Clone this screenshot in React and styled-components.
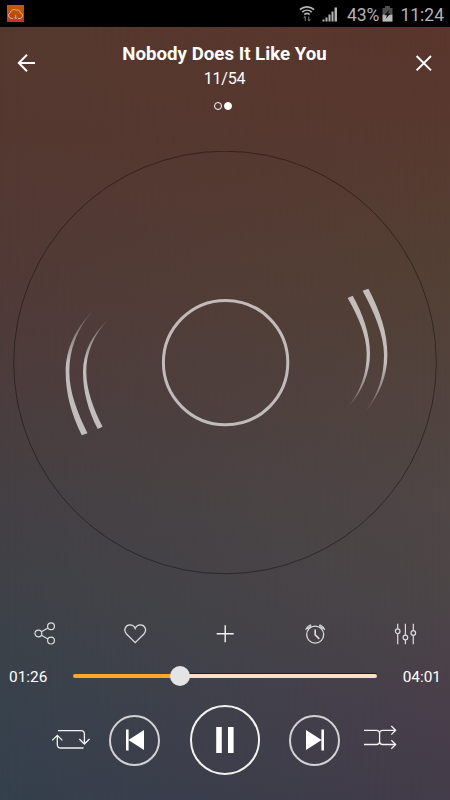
import React, { useState } from 'react';
import styled, { createGlobalStyle } from 'styled-components';

const GlobalStyle = createGlobalStyle`
    * {
        box-sizing: border-box;
    }

    body {
        margin: 0;
        background: #000;
        font-family: Roboto, 'Liberation Sans', sans-serif;
    }
`;

// Styled Components
const Screen = styled.div`
    display: flex;
    flex-direction: column;
    width: 450px;
    height: 800px;
    overflow: hidden;
    color: #fff;
`;

const StatusBar = styled.div`
    display: flex;
    align-items: center;
    justify-content: space-between;
    height: 27px;
    padding: 0 6px 0 7px;
    background: #000;
    color: #b4b4b4;
`;

const StatusGroup = styled.div`
    display: flex;
    align-items: center;
    height: 27px;
`;

const StatusText = styled.span`
    font-size: 17.5px;
    line-height: 27px;
    padding-top: 3px;
    margin-left: ${(props) => props.$gap}px;
`;

const StatusIcon = styled.div`
    display: flex;
    padding-top: ${(props) => props.$drop || 0}px;
    margin-left: ${(props) => props.$gap}px;
`;

const Player = styled.main`
    position: relative;
    isolation: isolate;
    display: flex;
    flex-direction: column;
    flex: 1;
    background: linear-gradient(
        180deg,
        #55392f 0%,
        #543830 14%,
        #513a37 33%,
        #4b3d3e 48%,
        #444044 61%,
        #3e4248 74%,
        #38424c 87%,
        #34404c 100%
    );

    /* warmer tint that fades in towards the right edge */
    &::before {
        content: '';
        position: absolute;
        inset: 0;
        z-index: -1;
        background: linear-gradient(
            180deg,
            #5a352b 0%,
            #573930 14%,
            #534034 32%,
            #51433e 48%,
            #4f4645 61%,
            #4c4547 74%,
            #493f4a 87%,
            #433b49 100%
        );
        mask-image: linear-gradient(90deg, transparent, #000);
    }
`;

const Header = styled.header`
    display: flex;
    justify-content: space-between;
    align-items: flex-start;
    height: 124px;
    padding: 15px 14px 0 15px;
`;

const IconButton = styled.button`
    display: flex;
    align-items: center;
    justify-content: center;
    width: ${(props) => props.$size || 24}px;
    height: ${(props) => props.$size || 24}px;
    margin: ${(props) => props.$margin || 0};
    padding: 0;
    border: none;
    background: none;
    color: inherit;
    cursor: pointer;
`;

const TrackInfo = styled.div`
    display: flex;
    flex-direction: column;
    align-items: center;
    margin-right: 2px;
`;

const TrackTitle = styled.h1`
    margin: 0;
    font-size: 18.7px;
    font-weight: 700;
    line-height: 24px;
    white-space: nowrap;
`;

const TrackCount = styled.span`
    font-size: 16px;
    line-height: 24px;
    margin-top: 1px;
    letter-spacing: -0.2px;
`;

const Dots = styled.div`
    display: flex;
    gap: 2px;
    margin: 10.5px 3px 0 0;
`;

const Dot = styled.span`
    width: 8px;
    height: 8px;
    border: 1px solid #fff;
    border-radius: 50%;
    background: ${(props) => (props.$active ? '#fff' : 'transparent')};
`;

const Disc = styled.svg`
    display: block;
    width: 450px;
    height: 424px;
`;

const Tools = styled.div`
    display: grid;
    grid-template-columns: repeat(5, 1fr);
    justify-items: center;
    align-items: center;
    height: 30px;
    margin-top: 43px;
    color: #dcdcde;
`;

const SeekRow = styled.div`
    display: flex;
    align-items: center;
    justify-content: space-between;
    height: 30px;
    margin-top: 13px;
    padding: 0 9px;
`;

const Time = styled.span`
    font-size: 15.4px;
    line-height: 30px;
    padding-top: 1px;
`;

const SeekBar = styled.div`
    display: flex;
    align-items: center;
    width: 304px;
    height: 20px;
`;

const Played = styled.div`
    height: 4px;
    border-radius: 2px 0 0 2px;
    background: #ffa726;
`;

const Thumb = styled.div`
    flex: none;
    width: 20px;
    height: 20px;
    margin: 0 -10px;
    border-radius: 50%;
    background: #e4e4e4;
    z-index: 1;
`;

const Remaining = styled.div`
    flex: 1;
    height: 4px;
    border-radius: 0 2px 2px 0;
    background: #ffdfc4;
    box-shadow: 0 -1px 0 #1d1c33;
`;

const Controls = styled.div`
    display: flex;
    align-items: center;
    height: 70px;
    margin-top: 14px;
    padding-left: 51px;
`;

const RoundButton = styled.button`
    display: flex;
    align-items: center;
    justify-content: center;
    width: ${(props) => props.$size}px;
    height: ${(props) => props.$size}px;
    margin-left: ${(props) => props.$gap}px;
    padding: 0;
    border: 2px solid ${(props) => props.$ring};
    border-radius: 50%;
    background: none;
    color: #fff;
    cursor: pointer;
`;

const ModeButton = styled.button`
    display: flex;
    margin-left: ${(props) => props.$gap || 0}px;
    padding: 0;
    border: none;
    background: none;
    color: #f2f2f2;
    cursor: pointer;
`;

const Icon = ({ w = 24, h = 24, stroke = 1.2, children }) => (
    <svg
        width={w}
        height={h}
        viewBox={`0 0 ${w} ${h}`}
        fill="none"
        stroke="currentColor"
        strokeWidth={stroke}
    >
        {children}
    </svg>
);

const AppBadge = () => (
    <svg width="17" height="17" viewBox="0 0 17 17">
        <defs>
            <linearGradient id="badge" x1="0" y1="0" x2="0" y2="1">
                <stop offset="0" stopColor="#b96205" />
                <stop offset="1" stopColor="#cf3304" />
            </linearGradient>
        </defs>
        <rect width="17" height="17" fill="url(#badge)" />
        <path
            d="M6 13.4H4.2A2.9 2.9 0 0 1 3.4 7.8C3.7 5.3 7 3.3 9.2 5.2C11 4.3 13.2 5.4 13.2 7.8C16.4 8.5 16.2 13 13 13.4H11M8.7 10.2V13.4M7.3 12.6L8.7 14L10.1 12.6"
            fill="none"
            stroke="#d8b8a0"
            strokeWidth="1"
        />
    </svg>
);

const WifiIcon = () => (
    <Icon w={16} h={17} stroke={1.7}>
        <path d="M0.9 4.7C5 0.8 11 0.8 15.1 4.7M3.2 7.2C6 4.6 10 4.6 12.8 7.2M5.3 9.6C7 8.1 9 8.1 10.7 9.6" />
        <path d="M6.3 16V11.5M4.7 13L6.3 11.2M9.7 11.5V16M11.3 14.4L9.7 16.2" stroke="#707070" strokeWidth="1.1" />
    </Icon>
);

const SignalIcon = () => (
    <svg width="16" height="15" viewBox="0 0 16 15" fill="#b4b4b4">
        <rect x="0.5" y="12.5" width="2" height="2" />
        <rect x="3.5" y="10.5" width="2" height="4" />
        <rect x="6.5" y="7.5" width="2" height="7" />
        <rect x="9.5" y="4.5" width="2" height="10" />
        <rect x="12.5" y="0.5" width="2.5" height="14" />
    </svg>
);

const BatteryIcon = () => (
    <svg width="11" height="16" viewBox="0 0 11 16">
        <path d="M3 0H8V2H10.5V9H0.5V2H3Z" fill="#4e4e4e" />
        <path d="M0.5 8.7H10.5V15.6H0.5Z" fill="#b9b9b9" />
        <path d="M7.2 3.6L2.6 9.2H5L3.6 12.8L8.6 7.6H6Z" fill="#0c0c0c" />
    </svg>
);

// Record with the grooves that shine on both sides
const Record = () => (
    <Disc viewBox="0 151 450 424">
        <defs>
            <linearGradient id="shineLeft" gradientUnits="userSpaceOnUse" x1="0" y1="310" x2="0" y2="436">
                <stop offset="0" stopColor="#fff" stopOpacity="0.1" />
                <stop offset="0.42" stopColor="#fff" stopOpacity="0.66" />
                <stop offset="1" stopColor="#fff" stopOpacity="0.66" />
            </linearGradient>
            <linearGradient id="shineRight" gradientUnits="userSpaceOnUse" x1="0" y1="288" x2="0" y2="413">
                <stop offset="0" stopColor="#fff" stopOpacity="0.66" />
                <stop offset="0.6" stopColor="#fff" stopOpacity="0.66" />
                <stop offset="1" stopColor="#fff" stopOpacity="0.1" />
            </linearGradient>
        </defs>
        <circle cx="225" cy="362.5" r="211.3" fill="none" stroke="#000" strokeOpacity="0.5" strokeWidth="0.8" />
        <circle cx="225.6" cy="362.6" r="62.2" fill="none" stroke="#fff" strokeOpacity="0.65" strokeWidth="3" />
        <g fill="url(#shineLeft)">
            <path d="M81.7 435.3C71 413 65.7 393 65.7 372C65.7 348 76 328 93.2 310.5C77 328.5 69.3 350 69.3 372C69.3 391 77 412 87.5 433.3Z" />
            <path d="M97.7 429C88 410 83 391 83 372C83 352 92 335 108 319.5C93 336 86.3 353 86.3 372C86.3 389 93 408 102.6 426.8Z" />
        </g>
        <g fill="url(#shineRight)">
            <path d="M368.4 288.7C380 311 387.4 332 387.4 355C387.4 376 379 396 365 412C378 395 384 376 384 355C384 335 374.5 313 362.6 290.8Z" />
            <path d="M352.7 295.7C363 314 370 334 370 353.5C370 373 362.5 391 349 406C361 390 366.7 373 366.7 353.5C366.7 336 358.5 317 347.6 298Z" />
        </g>
    </Disc>
);

const tools = [
    {
        name: 'Share',
        icon: (
            <Icon w={24} h={26}>
                <circle cx="5.4" cy="13.5" r="3.4" />
                <circle cx="18" cy="6.2" r="3.4" />
                <circle cx="18" cy="20.6" r="3.4" />
                <path d="M8.4 11.8L15 8M8.4 15.2L15 18.9" />
            </Icon>
        ),
    },
    {
        name: 'Favorite',
        icon: (
            <Icon w={24} h={26} stroke={1.3}>
                <path d="M12.2 22.6L3.5 14C-0.1 10 2.7 4.9 6.9 4.9C9.4 4.9 11.3 6.3 12.2 8.4C13.1 6.3 15 4.9 17.5 4.9C21.7 4.9 24.5 10 20.9 14Z" />
            </Icon>
        ),
    },
    {
        name: 'Add',
        icon: (
            <Icon w={24} h={26} stroke={1.4}>
                <path d="M3.7 13.7H20.7M12.2 5.2V22.2" stroke="#f4f4f4" />
            </Icon>
        ),
    },
    {
        name: 'Sleep timer',
        icon: (
            <Icon w={24} h={26}>
                <circle cx="12.2" cy="14.6" r="8.5" strokeWidth="1.3" />
                <path d="M12.2 9.4V14.8L16.3 18.9" strokeWidth="1.6" />
                <path d="M2.6 9.7C3.5 7.5 5 5.8 7.2 5L8.2 5.8M21.8 9.7C20.9 7.5 19.4 5.8 17.2 5L16.2 5.8M3.8 9.1L7.7 6.2M20.6 9.1L16.7 6.2" strokeWidth="1.2" />
            </Icon>
        ),
    },
    {
        name: 'Equalizer',
        icon: (
            <Icon w={24} h={26}>
                <path d="M4.7 3.8V8.8M4.7 13.6V24.3M12.4 3.8V15.1M12.4 19.9V24.3M20.3 3.8V10.6M20.3 15.4V24.3" />
                <circle cx="4.7" cy="11.2" r="2.3" />
                <circle cx="12.4" cy="17.5" r="2.3" />
                <circle cx="20.3" cy="13" r="2.3" />
            </Icon>
        ),
    },
];

const App = () => {
    const [paused, setPaused] = useState(false);
    const progress = 107 / 304;

    return (
        <Screen>
            <GlobalStyle />
            <StatusBar>
                <AppBadge />
                <StatusGroup>
                    <StatusIcon $gap={0}>
                        <WifiIcon />
                    </StatusIcon>
                    <StatusIcon $gap={7} $drop={1}>
                        <SignalIcon />
                    </StatusIcon>
                    <StatusText $gap={9}>43%</StatusText>
                    <StatusIcon $gap={3}>
                        <BatteryIcon />
                    </StatusIcon>
                    <StatusText $gap={7}>11:24</StatusText>
                </StatusGroup>
            </StatusBar>
            <Player>
                <Header>
                    <IconButton aria-label="Back" $margin="9px 0 0">
                        <Icon stroke={2}>
                            <path d="M20 12H3.5M12 3.8L3.8 12L12 20.2" />
                        </Icon>
                    </IconButton>
                    <TrackInfo>
                        <TrackTitle>Nobody Does It Like You</TrackTitle>
                        <TrackCount>11/54</TrackCount>
                        <Dots>
                            <Dot />
                            <Dot $active />
                        </Dots>
                    </TrackInfo>
                    <IconButton aria-label="Close" $margin="9px 0 0">
                        <Icon stroke={2}>
                            <path d="M4.6 5L19 19.4M19 5L4.6 19.4" />
                        </Icon>
                    </IconButton>
                </Header>
                <Record />
                <Tools>
                    {tools.map((tool) => (
                        <IconButton key={tool.name} aria-label={tool.name} $size={26}>
                            {tool.icon}
                        </IconButton>
                    ))}
                </Tools>
                <SeekRow>
                    <Time>01:26</Time>
                    <SeekBar>
                        <Played style={{ width: `${progress * 100}%` }} />
                        <Thumb />
                        <Remaining />
                    </SeekBar>
                    <Time>04:01</Time>
                </SeekRow>
                <Controls>
                    <ModeButton aria-label="Repeat">
                        <Icon w={40} h={24} stroke={1.3}>
                            <path d="M7 2.6H30C32 2.6 33.4 3.8 33.4 6V15.5M28.3 11L33.4 16L38.5 11" />
                            <path d="M32.5 20H10C7.6 20 6.3 18.6 6.3 16.4V7.3M1.2 12.4L6.3 7.3L11.4 12.4" />
                        </Icon>
                    </ModeButton>
                    <RoundButton aria-label="Previous" $size={51} $ring="#d2d2d4" $gap={18}>
                        <svg width="20" height="24" viewBox="0 0 20 24" fill="currentColor">
                            <path d="M1 1.5H3.6V22.5H1ZM3.4 12L19 2V22Z" />
                        </svg>
                    </RoundButton>
                    <RoundButton aria-label="Pause" $size={70} $ring="#f2f2f2" $gap={30} onClick={() => setPaused(!paused)}>
                        <svg width="20" height="28" viewBox="0 0 20 28" fill="currentColor">
                            {paused ? (
                                <path d="M2 1L19 14L2 27Z" />
                            ) : (
                                <path d="M1.2 1H6.8V27H1.2ZM13 1H18.6V27H13Z" />
                            )}
                        </svg>
                    </RoundButton>
                    <RoundButton aria-label="Next" $size={51} $ring="#d2d2d4" $gap={29}>
                        <svg width="20" height="24" viewBox="0 0 20 24" fill="currentColor">
                            <path d="M16.4 1.5H19V22.5H16.4ZM16.6 12L1 2V22Z" />
                        </svg>
                    </RoundButton>
                    <ModeButton aria-label="Shuffle" $gap={23}>
                        <Icon w={36} h={30} stroke={1.3}>
                            <path d="M1 5.3H13.5C15.5 5.3 16.6 6.4 16.6 8.4V16.4C16.6 18.4 17.7 19.5 19.7 19.5H32.5M1 19.5H13.5C15.5 19.5 16.6 18.4 16.6 16.4V8.4C16.6 6.4 17.7 5.3 19.7 5.3H32.5" />
                            <path d="M28.3 1L32.6 5.3L28.3 9.6M28.3 15.2L32.6 19.5L28.3 23.8" />
                        </Icon>
                    </ModeButton>
                </Controls>
            </Player>
        </Screen>
    );
};

export default App;
